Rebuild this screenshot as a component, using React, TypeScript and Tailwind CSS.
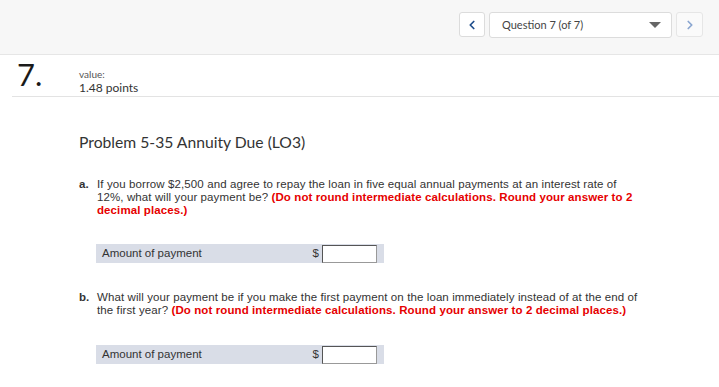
import { ChevronLeft, ChevronRight } from 'lucide-react';

export default function App() {
  return (
    <div className="w-[719px] h-[387px] bg-white overflow-hidden text-[#333] font-['Liberation_Sans',Arial,sans-serif]">
      <div className="h-[55px] bg-[#f7f7f7] border-b border-[#e6e6e6] flex justify-end gap-[4px] pt-[12px] pr-[16px]">
        <button className="w-[26px] h-[25px] bg-white border border-[#dcdcdc] rounded-[3px] flex items-center justify-center text-[#1f4e8c]">
          <ChevronLeft size={14} strokeWidth={3} />
        </button>
        <div className="w-[183px] h-[26px] bg-white border border-[#dcdcdc] rounded-[3px] flex items-center justify-between pl-[12px] pr-[10px]">
          <span className="text-[11px] text-[#444] font-['Lato','Open_Sans',sans-serif]">Question 7 (of 7)</span>
          <span className="w-0 h-0 border-l-[6px] border-r-[6px] border-t-[6px] border-l-transparent border-r-transparent border-t-[#666]" />
        </div>
        <button className="w-[27px] h-[25px] bg-[#fafafa] border border-[#e6e6e6] rounded-[3px] flex items-center justify-center text-[#8aa6d0]">
          <ChevronRight size={14} strokeWidth={3} />
        </button>
      </div>

      <div className="ml-[12px] h-[42px] border-b border-[#e3e3e3] flex">
        <div className="w-[67px] pl-[5px] pt-[1px] text-[31px] leading-[36px] text-[#1a1a1a] font-['Lato','Open_Sans',sans-serif]">7.</div>
        <div className="pt-[13px]">
          <div className="text-[10px] leading-[12px] text-[#555] font-['Lato','Open_Sans',sans-serif]">value:</div>
          <div className="text-[12px] leading-[15px] text-[#333] font-['Lato','Open_Sans',sans-serif]">1.48 points</div>
        </div>
      </div>

      <div className="pl-[79px]">
        <h2 className="mt-[36px] text-[15.7px] leading-[18px] text-[#333] font-['Lato','Open_Sans',sans-serif]">
          Problem 5-35 Annuity Due (LO3)
        </h2>

        <Part
          className="mt-[27px]"
          letter="a."
          text="If you borrow $2,500 and agree to repay the loan in five equal annual payments at an interest rate of 12%, what will your payment be?"
          note="(Do not round intermediate calculations. Round your answer to 2 decimal places.)"
        />
        <AnswerRow className="mt-[27px]" />

        <Part
          className="mt-[28px]"
          letter="b."
          text="What will your payment be if you make the first payment on the loan immediately instead of at the end of the first year?"
          note="(Do not round intermediate calculations. Round your answer to 2 decimal places.)"
        />
        <AnswerRow className="mt-[28px]" />
      </div>
    </div>
  );
}

function Part({ letter, text, note, className }: any) {
  return (
    <div className={`flex text-[11.5px] leading-[13px] tracking-[0.1px] text-[#333] ${className}`}>
      <span className="w-[18px] shrink-0 font-bold">{letter}</span>
      <p className="w-[545px]">
        {text} <span className="font-bold text-[#e60000]">{note}</span>
      </p>
    </div>
  );
}

function AnswerRow({ className }: any) {
  return (
    <div className={`ml-[17px] w-[288px] h-[19px] bg-[#d9dde7] flex items-center pl-[6px] pr-[7px] text-[11.5px] text-[#333] ${className}`}>
      <span className="flex-1">Amount of payment</span>
      <span className="mr-[3px]">$</span>
      <div className="w-[55px] h-[18px] bg-white border border-[#555] border-r-[#999] border-b-[#999]" />
    </div>
  );
}
